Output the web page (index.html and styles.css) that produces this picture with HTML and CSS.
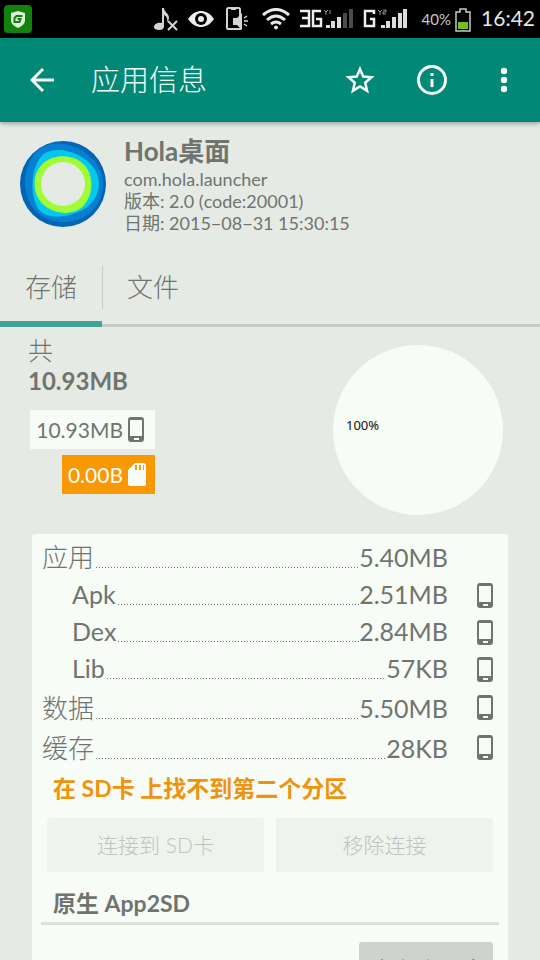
FILE: index.html
```html
<!DOCTYPE html>
<html lang="zh-CN">
<head>
<meta charset="utf-8">
<meta name="viewport" content="width=device-width, initial-scale=1">
<title>应用信息</title>
<link rel="stylesheet" href="styles.css">
</head>
<body>
<svg class="defs" aria-hidden="true">
  <symbol id="phone" viewBox="0 0 18 26">
    <path fill="currentColor" fill-rule="evenodd" d="M3 0h10a3 3 0 0 1 3 3v19a3 3 0 0 1-3 3H3a3 3 0 0 1-3-3V3a3 3 0 0 1 3-3zM2 3v16h12V3zM6 21v2h5v-2z"/>
  </symbol>
</svg>
<div class="app">
  <div class="status">
    <svg class="guard" width="28" height="28" viewBox="0 0 28 28" role="img" aria-label="安全卫士">
      <rect width="28" height="28" rx="4" fill="#12820c"/>
      <path d="M14 6l7 2v7c0 4-3 6-7 8-4-2-7-4-7-8V8z" fill="#dfeeda"/>
      <path d="M18.500 11h-6l-2 2v4h5l1-3h-3" fill="none" stroke="#12820c" stroke-width="2"/>
    </svg>
    <svg width="24" height="24" viewBox="0 0 24 24" fill="#d4d4d4" role="img" aria-label="静音">
      <path d="M8 1h2c0 4 5 5 5 10 0 1-1 3-2 4 1-4-1-6-3-7v11c0 3-2 4-5 4-3 0-5-1-5-3 0-3 4-5 8-4z"/>
      <path d="M14 14l9 9M23 14l-9 9" stroke="#d4d4d4" stroke-width="2"/>
    </svg>
    <svg width="26" height="18" viewBox="0 0 26 18" role="img" aria-label="护眼">
      <path d="M0 9C4 3 9 1 13 1s9 2 13 8c-4 6-9 8-13 8S4 15 0 9z" fill="#eee"/>
      <circle cx="13" cy="9" r="6" fill="#000"/><circle cx="13" cy="9" r="3" fill="#eee"/>
    </svg>
    <svg class="speaker" width="22" height="24" viewBox="0 0 22 24" role="img" aria-label="外放">
      <path d="M1 2.500q0-1.500 1.500-1.500h10q1.500 0 1.500 1.500V9M14 21v1H2q-1 0-1-1V2M5 2h5" fill="none" stroke="#d4d4d4" stroke-width="2"/>
      <path d="M7 11h4l5-5v17l-5-5H7z" fill="#d4d4d4"/>
      <path d="M18 11l3-2M18 14h4M18 17l3 2" stroke="#d4d4d4" stroke-width="1.500"/>
    </svg>
    <svg width="28" height="22" viewBox="0 0 28 22" fill="none" stroke="#e8e8e8" stroke-width="3" role="img" aria-label="无线网络">
      <path d="M1 7q13-11 26 0M5 12q9-8 18 0M9 16q5-4 10 0"/><circle cx="14" cy="19.500" r="2" fill="#e8e8e8" stroke="none"/>
    </svg>
    <svg width="53" height="22" viewBox="0 0 53 22" role="img" aria-label="3G 信号">
      <path d="M0 3h9v15H0M2 10h7M21 3h-8v15h8v-7h-5" fill="none" stroke="#eee" stroke-width="2.500"/>
      <path d="M24 2l2 2 2-2M26 4v3M30 2v4" fill="none" stroke="#999"/>
      <path d="M26 17h4v3h-4zM31 13h4v7h-4zM37 9h4v11h-4z" fill="#ddd"/><path d="M43 5h4v15h-4zM49 1h4v19h-4z" fill="#4b4b4b"/>
    </svg>
    <svg width="44" height="22" viewBox="0 0 44 22" role="img" aria-label="G 信号">
      <path d="M11 6V3H2v15h9v-7H7" fill="none" stroke="#eee" stroke-width="2.500"/>
      <path d="M15 2l2 2 2-2M17 4v3M20 2h3v2h-3v2h3" fill="none" stroke="#999"/>
      <path d="M18 17h4v3h-4zM23 13h4v7h-4zM29 9h4v11h-4zM35 5h4v15h-4zM40 1h4v19h-4z" fill="#ddd"/>
    </svg>
    <span class="battery">40%
      <svg width="16" height="24" viewBox="0 0 16 24" aria-hidden="true">
        <path d="M1 4h4V1h6v3h4v19H1z" fill="none" stroke="#c8c8c8" stroke-width="1.500"/><path d="M3 14h10v7H3z" fill="#76bd22"/>
      </svg>
    </span>
    <time class="clock">16:42</time>
  </div>

  <header class="toolbar">
    <button class="tool" aria-label="返回">
      <svg width="24" height="24" viewBox="0 0 24 24" fill="none" stroke="currentColor" stroke-width="3"><path d="M13 1L2 12l11 11M2 12h22"/></svg>
    </button>
    <h1>应用信息</h1>
    <button class="tool" aria-label="收藏">
      <svg width="30" height="30" viewBox="0 0 30 30" fill="none" stroke="currentColor" stroke-width="2.500"><path d="M15 4l3.200 7.600 8.300.700-6.300 5.400 1.900 8.100L15 21.500l-7.100 4.300 1.900-8.100-6.300-5.400 8.300-.700z"/></svg>
    </button>
    <button class="tool" aria-label="信息">
      <svg width="30" height="30" viewBox="0 0 30 30" fill="none" stroke="currentColor" stroke-width="3"><circle cx="15" cy="15" r="13.500"/><path d="M15 14v8M15 8v3"/></svg>
    </button>
    <button class="tool" aria-label="更多">
      <svg width="30" height="30" viewBox="0 0 30 30" fill="currentColor"><circle cx="15" cy="6" r="3.200"/><circle cx="15" cy="15" r="3.200"/><circle cx="15" cy="24" r="3.200"/></svg>
    </button>
  </header>

  <main>
    <section class="summary">
      <svg width="88" height="88" viewBox="0 0 88 88" aria-hidden="true">
        <circle cx="44" cy="44" r="43" fill="#0365b4"/>
        <path d="M22 8C44-6 84 14 84 44c0 28-28 44-53 36C1 70-2 25 22 8z" fill="#0780d2"/>
        <path d="M26 13C40 6 62 12 74 27c10 13 7 30-6 40-14 10-36 13-46 5C10 62 10 24 26 13z" fill="#04c8ec"/>
        <path d="M27 21c14-9 35-5 42 9 6 12 4 29-7 38-12 9-32 5-41-7-9-13-7-31 6-40z" fill="#a2fc35"/>
        <circle cx="44" cy="44" r="22" fill="#e6eae5"/>
      </svg>
      <div class="facts">
        <h2>Hola桌面</h2>
        <p>com.hola.launcher</p>
        <p>版本: 2.0 (code:20001)</p>
        <p>日期: 2015−08−31 15:30:15</p>
      </div>
    </section>

    <nav class="tabs">
      <a class="tab active" href="#storage" aria-current="page">存储</a>
      <a class="tab" href="#files">文件</a>
    </nav>

    <section class="usage" id="storage">
      <div class="totals">
        <div class="total-label">共</div>
        <strong>10.93MB</strong>
        <div class="chip">10.93MB<svg width="18" height="26"><use href="#phone"/></svg></div>
        <div class="chip sd">0.00B<svg width="18" height="24" viewBox="0 0 18 24"><path fill="currentColor" fill-rule="evenodd" d="M7 0h8q3 0 3 3v18q0 2-2 2H2q-2 0-2-2V7zM7 2v5h2V2zM11 2v5h2V2zM15 2v5h1V2z"/></svg></div>
      </div>
      <div class="pie"><span>100%</span></div>
    </section>

    <section class="card">
      <dl>
        <div class="row"><dt>应用</dt><i></i><dd>5.40MB</dd><span class="where"></span></div>
        <div class="row sub"><dt>Apk</dt><i></i><dd>2.51MB</dd><span class="where"><svg width="18" height="26"><use href="#phone"/></svg></span></div>
        <div class="row sub"><dt>Dex</dt><i></i><dd>2.84MB</dd><span class="where"><svg width="18" height="26"><use href="#phone"/></svg></span></div>
        <div class="row sub"><dt>Lib</dt><i></i><dd>57KB</dd><span class="where"><svg width="18" height="26"><use href="#phone"/></svg></span></div>
        <div class="row"><dt>数据</dt><i></i><dd>5.50MB</dd><span class="where"><svg width="18" height="26"><use href="#phone"/></svg></span></div>
        <div class="row"><dt>缓存</dt><i></i><dd>28KB</dd><span class="where"><svg width="18" height="26"><use href="#phone"/></svg></span></div>
      </dl>
      <p class="warning">在 SD卡 上找不到第二个分区</p>
      <div class="actions">
        <button disabled>连接到 SD卡</button>
        <button disabled>移除连接</button>
      </div>
      <h3>原生 App2SD</h3>
      <div class="actions end">
        <button>移动到 SD卡</button>
      </div>
    </section>
  </main>
</div>
</body>
</html>
```
FILE: styles.css
```css
* { box-sizing: border-box; }
body, h1, h2, h3, p, dl, dd { margin: 0; }
body {
  background: #e6eae5;
  color: #70746f;
  font-family: Lato, "Noto Sans CJK SC", sans-serif;
}
button { border: 0; font: inherit; }
svg { flex: none; display: block; }
.defs { position: absolute; width: 0; height: 0; }

.app { display: flex; flex-direction: column; height: 100vh; }

.status {
  display: flex;
  align-items: center;
  gap: 10px;
  height: 38px;
  flex: none;
  padding: 0 5px 0 4px;
  background: #000;
  color: #e4e4e4;
}
.guard { margin-right: auto; }
.speaker { margin: 0 4px 0 2px; }
.battery { display: flex; align-items: center; gap: 4px; margin-left: 5px; font-size: 15px; line-height: 24px; color: #c8c8c8; }
.battery svg { margin-top: 1px; }
.clock { font-size: 21px; line-height: 24px; padding-bottom: 3px; }

.toolbar {
  display: flex;
  align-items: center;
  flex: none;
  height: 84px;
  background: #028876;
  color: #f6fcf6;
  box-shadow: 0 1px 5px rgba(0, 0, 0, .4);
  z-index: 1;
}
.toolbar h1 { flex: 1; padding: 0 0 4px 7px; font-size: 29px; font-weight: 300; }
.tool {
  display: grid;
  place-items: center;
  width: 72px;
  height: 72px;
  padding: 0;
  background: none;
  color: inherit;
}
.tool:first-child { width: 84px; }

main { flex: 1; min-height: 0; overflow-y: auto; scrollbar-width: none; }

.summary { display: flex; align-items: center; gap: 17px; height: 128px; padding: 10px 19px 14px; }
.facts { font-size: 18px; line-height: 22px; }
.facts h2 { font-size: 26px; line-height: 34px; }

.tabs { display: flex; border-bottom: 3px solid #c7cac6; height: 77px; }
.tab {
  position: relative;
  display: grid;
  place-items: center;
  width: 102px;
  padding-bottom: 4px;
  color: inherit;
  font-size: 26px;
  font-weight: 300;
  text-decoration: none;
}
.tab.active::before {
  content: "";
  position: absolute;
  right: -1px;
  top: 16px;
  bottom: 15px;
  border-right: 1px solid #c7cac6;
}
.tab.active::after {
  content: "";
  position: absolute;
  inset: auto 0 -3px;
  height: 6px;
  background: #42a493;
}

.usage { display: flex; justify-content: space-between; padding: 8px 37px 19px 28px; }
.totals { display: flex; flex-direction: column; align-items: flex-end; width: 127px; }
.totals > :nth-child(-n+2) { align-self: flex-start; }
.total-label { font-size: 25px; line-height: 30px; font-weight: 300; }
.totals strong { font-size: 24px; line-height: 32px; margin-bottom: 13px; }
.chip {
  display: flex;
  align-items: center;
  gap: 5px;
  height: 39px;
  margin-bottom: 6px;
  padding: 0 9px 0 6px;
  background: #f7fcf6;
  font-size: 21px;
  line-height: 24px;
}
.chip.sd { background: #f79804; color: #f7fcf6; }
.pie {
  display: flex;
  align-items: center;
  width: 170px;
  height: 170px;
  margin-top: 10px;
  padding: 0 13px 10px;
  border-radius: 50%;
  background: #f7fcf6;
  color: #111;
  font: 13px "Noto Sans", sans-serif;
}

.card { margin: 0 32px; padding: 3px 9px 16px; border-radius: 3px; background: #f7fcf6; }
.row { display: flex; align-items: center; height: 40px; padding-left: 1px; font-size: 26px; line-height: 36px; }
.row.sub { height: 37px; padding-left: 31px; font-size: 25px; }
.row.sub dt, .row.sub dd { padding-bottom: 4px; }
.row i {
  flex: 1;
  align-self: flex-end;
  height: 1px;
  margin: 0 0 9px 2px;
  background: repeating-linear-gradient(90deg, #70746f 0 1px, transparent 1px 3px);
}
.row dt { font-weight: 300; }
.row.sub dt { font-weight: 400; }
.row dd { font-size: 25px; }
.where { width: 51px; padding-left: 29px; }

.warning { padding-left: 12px; color: #f0930c; font-size: 23px; font-weight: 700; line-height: 40px; }
.actions { display: flex; gap: 12px; padding: 10px 6px; }
.actions button { flex: 1; height: 54px; padding: 0 0 3px; border-radius: 3px; background: #cfd3ce; color: #111; font-size: 21px; }
.actions button:disabled { background: #eff3ee; color: #bfc3be; font-weight: 300; }
.card h3 { padding: 3px 0 0 12px; border-bottom: 3px solid #dde1dc; font-size: 23px; line-height: 37px; margin-bottom: 7px; }
.actions.end { justify-content: flex-end; }
.actions.end button { flex: none; width: 134px; }
```
